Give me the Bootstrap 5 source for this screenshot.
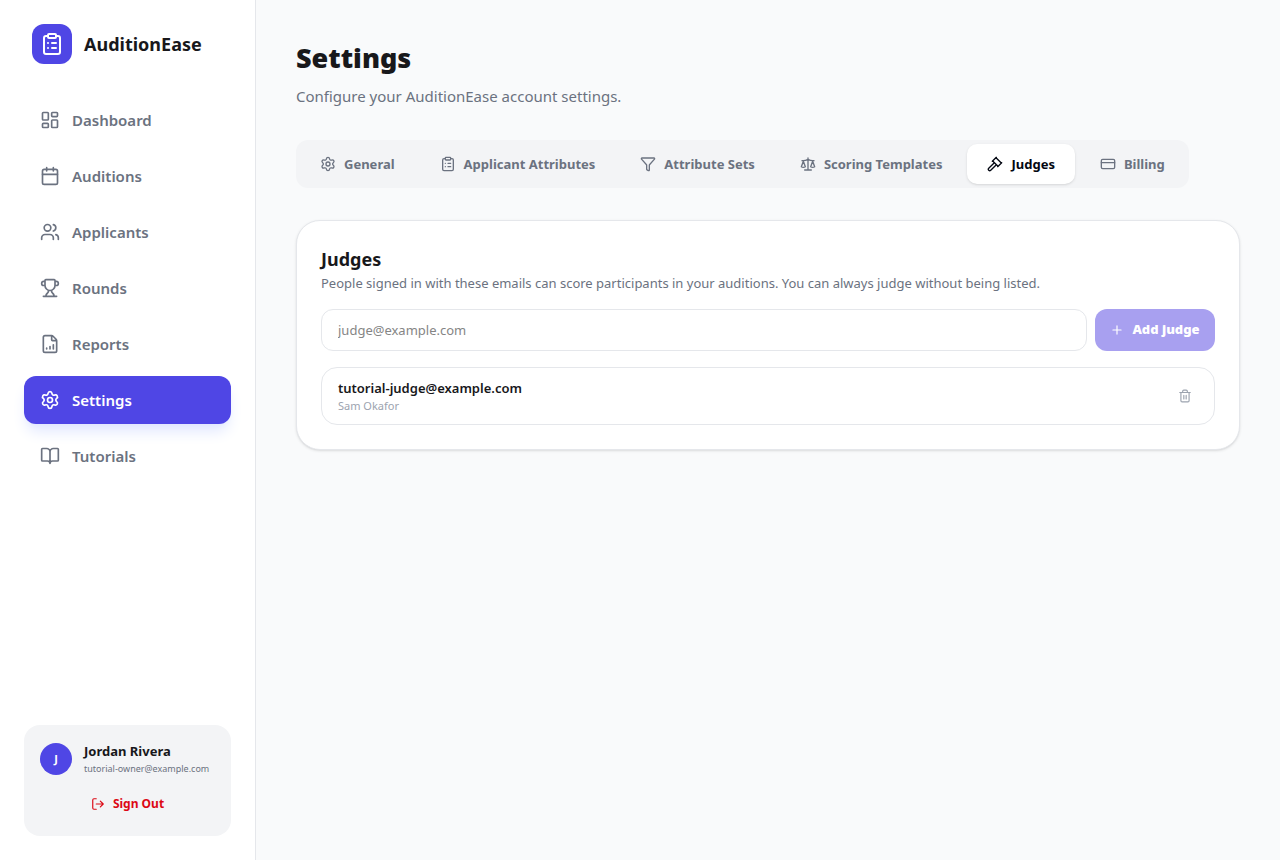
<!DOCTYPE html>
<html lang="en">
<head>
<meta charset="utf-8">
<meta name="viewport" content="width=device-width, initial-scale=1">
<title>Settings - AuditionEase</title>
<link href="https://cdn.jsdelivr.net/npm/bootstrap@5.3.0/dist/css/bootstrap.min.css" rel="stylesheet">
<style>
  :root { --brand: #4f46e5; --line: #e5e7eb; --muted: #6b7280; --ink: #18181b; }
  body { font-family: "Noto Sans", "Open Sans", sans-serif; background: #f9fafb; color: var(--ink); font-size: 14px; line-height: 20px; }
  svg { fill: none; stroke: currentColor; stroke-width: 2; stroke-linecap: round; stroke-linejoin: round; flex: none; width: 16px; height: 16px; }
  .sidebar { width: 256px; border-right: 1px solid var(--line); }
  .logo { width: 40px; height: 40px; border-radius: 12px; background: var(--brand); }
  .logo svg { width: 24px; height: 24px; }
  .brand-row, .account-row { gap: 12px; }
  .account-row { margin-bottom: 12px; }
  .brand-name { font-size: 18px; line-height: 28px; font-weight: 700; }
  .side-link { height: 48px; padding: 0 16px; gap: 12px; border-radius: 12px; color: var(--muted); font-size: 15px; font-weight: 600; }
  .side-link svg { width: 20px; height: 20px; }
  .side-link.active { background: var(--brand); color: #fff; box-shadow: 0 10px 15px -3px #e0e7ff, 0 4px 6px -4px #e0e7ff; }
  .account { background: #f3f4f6; border-radius: 16px; }
  .avatar { width: 32px; height: 32px; background: var(--brand); font-size: 11px; }
  .account-name { font-size: 13px; line-height: 20px; font-weight: 700; }
  .account-mail { font-size: 9px; line-height: 15px; color: var(--muted); }
  .sign-out { color: #dc0814; font-size: 12px; line-height: 16px; }
  .content { padding: 40px; }
  .page-title { font-size: 27px; line-height: 36px; font-weight: 900; }
  .page-note { font-size: 15px; line-height: 24px; color: var(--muted); }
  .tab-strip { background: #f3f4f6; border-radius: 12px; margin: 32px 0; gap: 5px; }
  .tab-btn { height: 40px; padding: 0 20px; gap: 8px; border: 0; border-radius: 10px; background: transparent; color: var(--muted); font-size: 13px; font-weight: 700; white-space: nowrap; }
  .tab-btn.active { background: #fff; color: #030712; box-shadow: 0 1px 3px #0000001a, 0 1px 2px -1px #0000001a; }
  .panel { border: 1px solid var(--line); border-radius: 24px; box-shadow: 0 1px 3px #0000001a, 0 1px 2px -1px #0000001a; }
  .panel-title { font-size: 18px; line-height: 28px; font-weight: 700; }
  .panel-note { font-size: 13px; color: var(--muted); }
  .mail-field { height: 42px; padding: 0 16px; border: 1px solid var(--line); border-radius: 12px; font-size: 13px; }
  .mail-field::placeholder { color: #858585; }
  .add-btn, .add-btn:disabled { height: 42px; width: 120px; border: 0; border-radius: 12px; background: #a8a0f0; color: #fff; opacity: 1; font-size: 13px; font-weight: 900; padding: 0; }
  .judge-row { border: 1px solid var(--line); border-radius: 16px; padding: 10px 16px; }
  .judge-mail { font-size: 13px; font-weight: 600; }
  .judge-name { font-size: 11px; line-height: 16px; color: #9ca3af; }
  .delete-btn { color: #9ca3af; padding: 6px; }
  .delete-btn svg, .sign-out svg, .add-btn svg { width: 14px; height: 14px; }
</style>
</head>
<body>
<svg class="d-none" aria-hidden="true">
  <symbol id="clipboard" viewBox="0 0 24 24"><rect x="8" y="2" width="8" height="4" rx="1"/><path d="M16 4h2a2 2 0 0 1 2 2v14a2 2 0 0 1-2 2H6a2 2 0 0 1-2-2V6a2 2 0 0 1 2-2h2M12 11h4M12 16h4M8 11h.01M8 16h.01"/></symbol>
  <symbol id="gear" viewBox="0 0 24 24"><path d="M9.671 4.136a2.34 2.34 0 0 1 4.659 0 2.34 2.34 0 0 0 3.319 1.915 2.34 2.34 0 0 1 2.33 4.033 2.34 2.34 0 0 0 0 3.831 2.34 2.34 0 0 1-2.33 4.033 2.34 2.34 0 0 0-3.319 1.915 2.34 2.34 0 0 1-4.659 0 2.34 2.34 0 0 0-3.32-1.915 2.34 2.34 0 0 1-2.33-4.033 2.34 2.34 0 0 0 0-3.831A2.34 2.34 0 0 1 6.35 6.051a2.34 2.34 0 0 0 3.319-1.915"/><circle cx="12" cy="12" r="3"/></symbol>
</svg>
<div class="d-flex min-vh-100">
  <aside class="sidebar bg-white d-flex flex-column flex-shrink-0 p-4">
    <div class="brand-row d-flex align-items-center px-2 mb-4 pb-2">
      <span class="logo d-flex align-items-center justify-content-center text-white"><svg><use href="#clipboard"/></svg></span>
      <span class="brand-name">AuditionEase</span>
    </div>
    <nav class="nav flex-column gap-2 flex-nowrap">
      <a href="#" class="side-link d-flex align-items-center text-decoration-none"><svg viewBox="0 0 24 24"><rect x="3" y="3" width="7" height="9" rx="1"/><rect x="14" y="3" width="7" height="5" rx="1"/><rect x="14" y="12" width="7" height="9" rx="1"/><rect x="3" y="16" width="7" height="5" rx="1"/></svg>Dashboard</a>
      <a href="#" class="side-link d-flex align-items-center text-decoration-none"><svg viewBox="0 0 24 24"><path d="M8 2v4M16 2v4M3 10h18"/><rect x="3" y="4" width="18" height="18" rx="2"/></svg>Auditions</a>
      <a href="#" class="side-link d-flex align-items-center text-decoration-none"><svg viewBox="0 0 24 24"><path d="M16 21v-2a4 4 0 0 0-4-4H6a4 4 0 0 0-4 4v2M16 3.128a4 4 0 0 1 0 7.744M22 21v-2a4 4 0 0 0-3-3.87"/><circle cx="9" cy="7" r="4"/></svg>Applicants</a>
      <a href="#" class="side-link d-flex align-items-center text-decoration-none"><svg viewBox="0 0 24 24"><path d="M10 14.66v1.626a2 2 0 0 1-.976 1.696A5 5 0 0 0 7 21.978M14 14.66v1.626a2 2 0 0 0 .976 1.696A5 5 0 0 1 17 21.978M18 9h1.5a1 1 0 0 0 0-5H18M4 22h16M6 9a6 6 0 0 0 12 0V3a1 1 0 0 0-1-1H7a1 1 0 0 0-1 1zM6 9H4.500a1 1 0 0 1 0-5H6"/></svg>Rounds</a>
      <a href="#" class="side-link d-flex align-items-center text-decoration-none"><svg viewBox="0 0 24 24"><path d="M6 22a2 2 0 0 1-2-2V4a2 2 0 0 1 2-2h8a2.400 2.400 0 0 1 1.704.706l3.588 3.588A2.400 2.400 0 0 1 20 8v12a2 2 0 0 1-2 2zM14 2v5a1 1 0 0 0 1 1h5M8 18v-1M12 18v-3M16 18v-5"/></svg>Reports</a>
      <a href="#" class="side-link active d-flex align-items-center text-decoration-none" aria-current="page"><svg><use href="#gear"/></svg>Settings</a>
      <a href="#" class="side-link d-flex align-items-center text-decoration-none"><svg viewBox="0 0 24 24"><path d="M12 7v14M3 18a1 1 0 0 1-1-1V4a1 1 0 0 1 1-1h5a4 4 0 0 1 4 4 4 4 0 0 1 4-4h5a1 1 0 0 1 1 1v13a1 1 0 0 1-1 1h-6a3 3 0 0 0-3 3 3 3 0 0 0-3-3z"/></svg>Tutorials</a>
    </nav>
    <div class="account mt-auto p-3">
      <div class="account-row d-flex align-items-center">
        <span class="avatar rounded-circle d-flex align-items-center justify-content-center text-white fw-bold flex-shrink-0">J</span>
        <div>
          <div class="account-name">Jordan Rivera</div>
          <div class="account-mail">tutorial-owner@example.com</div>
        </div>
      </div>
      <button type="button" class="sign-out btn border-0 w-100 d-flex align-items-center justify-content-center gap-2 fw-bold py-2"><svg viewBox="0 0 24 24"><path d="m16 17 5-5-5-5M21 12H9M9 21H5a2 2 0 0 1-2-2V5a2 2 0 0 1 2-2h4"/></svg>Sign Out</button>
    </div>
  </aside>
  <main class="content flex-grow-1">
    <h1 class="page-title mb-2">Settings</h1>
    <p class="page-note mb-0">Configure your AuditionEase account settings.</p>
    <div class="d-flex">
      <div class="tab-strip d-flex p-1" role="tablist">
        <button type="button" class="tab-btn d-flex align-items-center" role="tab"><svg><use href="#gear"/></svg>General</button>
        <button type="button" class="tab-btn d-flex align-items-center" role="tab"><svg><use href="#clipboard"/></svg>Applicant Attributes</button>
        <button type="button" class="tab-btn d-flex align-items-center" role="tab"><svg viewBox="0 0 24 24"><path d="M10 20a1 1 0 0 0 .553.895l2 1A1 1 0 0 0 14 21v-7a2 2 0 0 1 .517-1.341L21.740 4.670A1 1 0 0 0 21 3H3a1 1 0 0 0-.742 1.670l7.225 7.989A2 2 0 0 1 10 14z"/></svg>Attribute Sets</button>
        <button type="button" class="tab-btn d-flex align-items-center" role="tab"><svg viewBox="0 0 24 24"><path d="m16 16 3-8 3 8c-.870.650-1.920 1-3 1s-2.130-.350-3-1zM2 16l3-8 3 8c-.870.650-1.920 1-3 1s-2.130-.350-3-1zM7 21h10M12 3v18M3 7h2c2 0 5-1 7-2 2 1 5 2 7 2h2"/></svg>Scoring Templates</button>
        <button type="button" class="tab-btn active d-flex align-items-center" role="tab" aria-selected="true"><svg viewBox="0 0 24 24"><path d="m14 13-8.381 8.380a1 1 0 0 1-3.001-3l8.384-8.381M16 16l6-6M21.500 10.500l-8-8M8 8l6-6M8.500 7.500l8 8"/></svg>Judges</button>
        <button type="button" class="tab-btn d-flex align-items-center" role="tab"><svg viewBox="0 0 24 24"><rect x="2" y="5" width="20" height="14" rx="2"/><path d="M2 10h20"/></svg>Billing</button>
      </div>
    </div>
    <section class="panel bg-white p-4">
      <h2 class="panel-title mb-0">Judges</h2>
      <p class="panel-note mb-3">People signed in with these emails can score participants in your auditions. You can always judge without being listed.</p>
      <form class="d-flex gap-2 mb-3">
        <input type="email" class="mail-field form-control flex-grow-1" placeholder="judge@example.com" aria-label="Judge email">
        <button type="submit" class="add-btn btn d-flex align-items-center justify-content-center gap-2 flex-shrink-0" disabled><svg viewBox="0 0 24 24"><path d="M5 12h14M12 5v14"/></svg>Add judge</button>
      </form>
      <div class="judge-row d-flex align-items-center justify-content-between">
        <div>
          <div class="judge-mail">tutorial-judge@example.com</div>
          <div class="judge-name">Sam Okafor</div>
        </div>
        <button type="button" class="delete-btn btn border-0 d-flex" aria-label="Remove judge"><svg viewBox="0 0 24 24"><path d="M10 11v6M14 11v6M19 6v14a2 2 0 0 1-2 2H7a2 2 0 0 1-2-2V6M3 6h18M8 6V4a2 2 0 0 1 2-2h4a2 2 0 0 1 2 2v2"/></svg></button>
      </div>
    </section>
  </main>
</div>
<script src="https://cdn.jsdelivr.net/npm/bootstrap@5.3.0/dist/js/bootstrap.bundle.min.js"></script>
</body>
</html>
